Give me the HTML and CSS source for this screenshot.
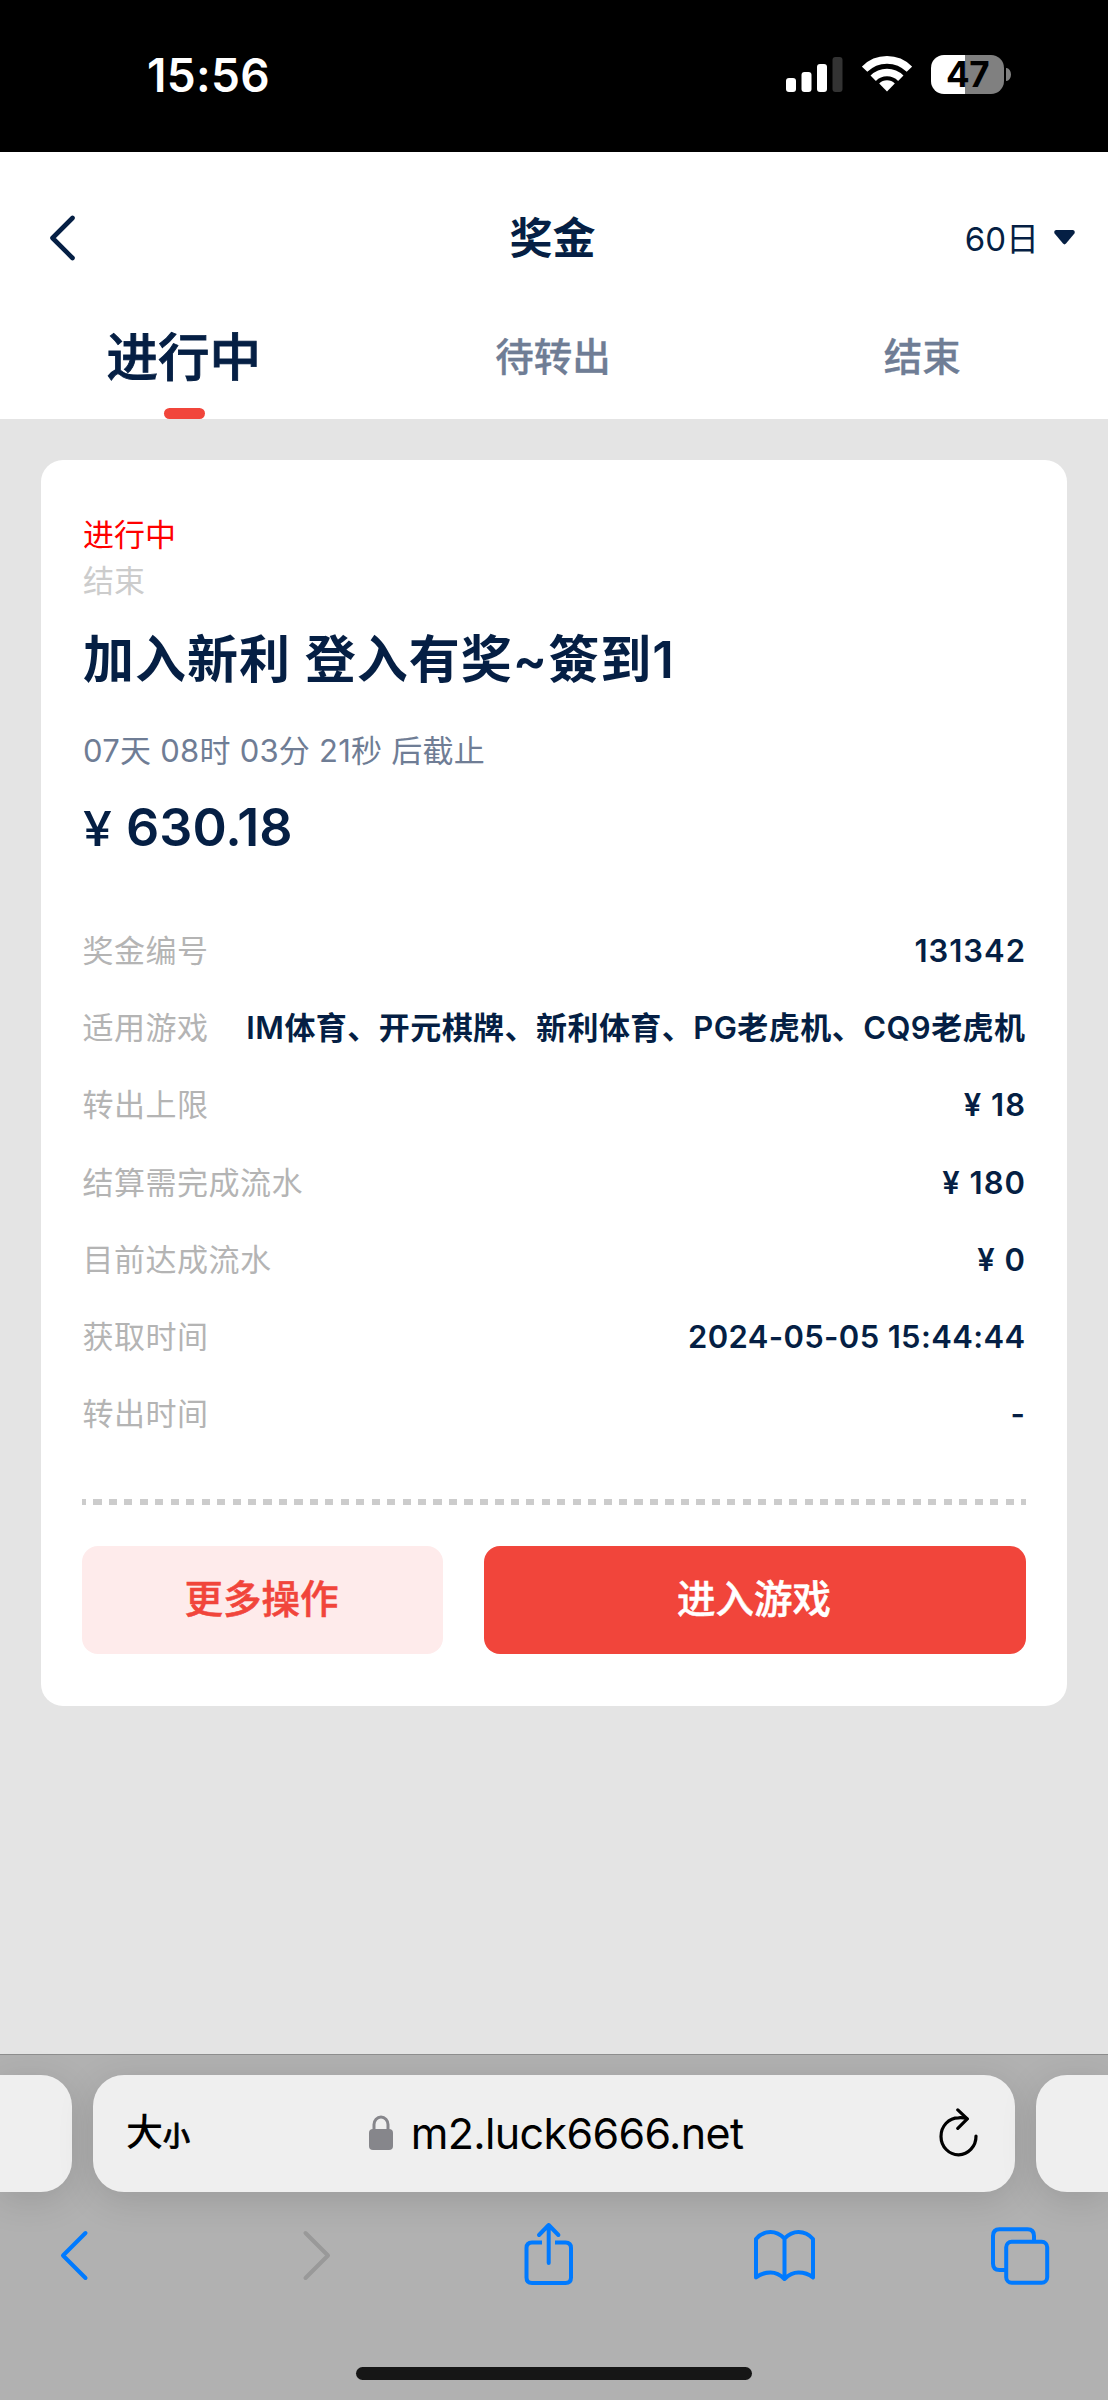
FILE: index.html
```html
<!DOCTYPE html>
<html lang="zh-CN">
<head>
<meta charset="utf-8">
<title>奖金</title>
<link rel="stylesheet" href="styles.css">
</head>
<body>
<div class="screen">
  <div class="status">
    <span class="clock">15:56</span>
    <div class="status-icons">
      <svg class="signal" width="57" height="36" viewBox="0 0 57 36">
        <rect x="0" y="22" width="10" height="14" rx="3" fill="#fff"/>
        <rect x="15.5" y="16" width="10" height="20" rx="3" fill="#fff"/>
        <rect x="31" y="8" width="10" height="28" rx="3" fill="#fff"/>
        <rect x="46.5" y="1" width="10" height="35" rx="3" fill="#333"/>
      </svg>
      <svg class="wifi" width="50" height="37" viewBox="0 0 50 37">
        <g fill="none" stroke="#fff" stroke-width="7.6">
          <path d="M2.6 14.2 A31.5 31.5 0 0 1 47.4 14.2"/>
          <path d="M11.2 23.2 A19.5 19.5 0 0 1 38.8 23.2"/>
        </g>
        <path d="M25 36.5 L17.2 28.6 A11 11 0 0 1 32.8 28.6 Z" fill="#fff"/>
      </svg>
      <div class="battery"><span class="battery-level">47</span><i class="battery-cap"></i></div>
    </div>
  </div>

  <header class="header">
    <svg class="back" width="28" height="46" viewBox="0 0 28 46"><path d="M24.5 3 L4.5 23 L24.5 43" fill="none" stroke="#051f44" stroke-width="4.6" stroke-linecap="round" stroke-linejoin="round"/></svg>
    <h1 class="title">奖金</h1>
    <div class="range"><span>60日</span><svg width="21" height="15" viewBox="0 0 21 15"><path d="M2 0H19Q21.6 1 20.4 3.4L12 13.6Q10.5 15.2 9 13.6L.6 3.4Q-.6 1 2 0Z" fill="#051f44"/></svg></div>
  </header>
  <nav class="tabs">
    <div class="tab active">进行中</div>
    <div class="tab">待转出</div>
    <div class="tab">结束</div>
  </nav>

  <main class="content">
    <section class="card">
      <div class="state on">进行中</div>
      <div class="state off">结束</div>
      <h2 class="name">加入新利 登入有奖~簽到1</h2>
      <div class="timer">07天 08时 03分 21秒 后截止</div>
      <div class="amount"><span class="yen">¥</span> 630.18</div>
      <dl class="rows">
        <div class="row"><dt>奖金编号</dt><dd>131342</dd></div>
        <div class="row"><dt>适用游戏</dt><dd class="games">IM体育、开元棋牌、新利体育、PG老虎机、CQ9老虎机</dd></div>
        <div class="row"><dt>转出上限</dt><dd>¥ 18</dd></div>
        <div class="row"><dt>结算需完成流水</dt><dd>¥ 180</dd></div>
        <div class="row"><dt>目前达成流水</dt><dd>¥ 0</dd></div>
        <div class="row"><dt>获取时间</dt><dd class="date">2024-05-05 15:44:44</dd></div>
        <div class="row"><dt>转出时间</dt><dd>-</dd></div>
      </dl>
      <div class="divider"></div>
      <div class="actions">
        <div class="btn more">更多操作</div>
        <div class="btn play">进入游戏</div>
      </div>
    </section>
  </main>

  <footer class="browser">
    <div class="pills">
      <div class="pill side left"></div>
      <div class="pill address">
        <div class="size"><span class="big">大</span><span class="small">小</span></div>
        <div class="url">
          <svg width="24" height="36" viewBox="0 0 24 36"><rect x="0" y="14" width="24" height="21" rx="4" fill="#86868b"/><path d="M5 16V9.500a7 7.500 0 0 1 14 0V16" fill="none" stroke="#86868b" stroke-width="3"/></svg>
          <span>m2.luck6666.net</span>
        </div>
        <svg class="reload" width="40" height="50" viewBox="0 0 40 50"><g fill="none" stroke="#000" stroke-width="3.2" stroke-linecap="round" stroke-linejoin="round"><path d="M37 28A17.500 18.500 0 1 1 19.500 9.800Q24 9.400 28 10.700"/><path d="M18.800 1.900L28.300 10.900L18.800 20.400"/></g></svg>
      </div>
      <div class="pill side right"></div>
    </div>
    <div class="tools">
      <svg width="64" height="68" viewBox="0 0 64 68"><path d="M43.500 13L21 35.500L43.500 58" class="line blue"/></svg>
      <svg width="64" height="68" viewBox="0 0 64 68"><path d="M26.500 13L49 35.500L26.500 58" class="line gray"/></svg>
      <svg width="64" height="68" viewBox="0 0 64 68"><g class="line blue"><path class="butt" d="M27 22.500H17Q11.500 22.500 11.500 28V57.500Q11.500 63 17 63H50.500Q56 63 56 57.500V28Q56 22.500 50.500 22.500H40"/><path d="M33.700 43V5M24 15L33.700 5L43.400 15"/></g></svg>
      <svg width="64" height="68" viewBox="0 0 64 68"><path d="M32.500 18.500V59M32.500 18.500Q26 12 18.500 12Q10 12 4 19V57.500Q10 52.500 18.500 52.500Q26 52.500 32.500 59Q39 52.500 46.500 52.500Q55 52.500 61 57.500V19Q55 12 46.500 12Q39 12 32.500 18.500Z" class="line blue"/></svg>
      <svg width="64" height="68" viewBox="0 0 64 68"><g class="line blue"><path class="butt" d="M18 50H11.500Q5 50 5 43.500V16Q5 9.300 11.500 9.300H39.500Q46 9.300 46 16V21.500"/><rect x="18.200" y="21.700" width="41" height="41" rx="5.500"/></g></svg>
    </div>
    <div class="home"></div>
  </footer>
</div>
</body>
</html>
```
FILE: styles.css
```css
* { box-sizing: border-box; }
body { margin: 0; }
.screen {
  width: 1108px; height: 2400px; display: flex; flex-direction: column; overflow: hidden;
  background: #e4e4e4; color: #051f44;
  font-family: Inter, "Noto Sans CJK SC", sans-serif;
}
h1, h2, dl, dd { margin: 0; }

.status {
  height: 152px; padding: 0 104px 0 147px; background: #000; color: #fff;
  display: flex; justify-content: space-between; align-items: flex-start;
}
.clock { margin-top: 47px; font-size: 46px; line-height: 56px; font-weight: 600; letter-spacing: .3px; }
.status-icons { display: flex; align-items: flex-start; padding-top: 55px; }
.signal { margin: 1px 19px 0 0; }
.wifi { margin-right: 19px; }
.battery {
  position: relative; width: 73px; height: 39px; border-radius: 13px;
  background: linear-gradient(90deg, #fff 34px, #808080 34px);
}
.battery-level {
  display: block; text-align: center; color: #000; font-size: 35px; line-height: 39px;
  font-weight: 700; letter-spacing: -.5px;
}
.battery-cap {
  position: absolute; left: 75px; top: 13px; width: 5px; height: 13px;
  border-radius: 0 5px 5px 0 / 0 7px 7px 0; background: #808080;
}

.header {
  height: 165px; padding: 6px 33px 0 48px; background: #fff;
  display: grid; grid-template-columns: 1fr 86px 1fr; align-items: center;
}
.title { font-size: 43px; line-height: 60px; font-weight: 600; margin-left: -9px; white-space: nowrap; }
.range { display: flex; justify-content: flex-end; align-items: center; gap: 15px; font-size: 33px; }
.range span { margin-top: -1px; }
.tabs { height: 102px; background: #fff; display: grid; grid-template-columns: repeat(3, 1fr); text-align: center; }
.tab {
  position: relative; right: 1px; padding-top: 1px; font-size: 38.500px; line-height: 78px; font-weight: 500;
  color: #6f7d95; -webkit-text-stroke: .3px;
}
.tab.active { color: #051f44; font-size: 51.500px; -webkit-text-stroke: .9px; }
.tab.active::after {
  content: ""; position: absolute; left: 50%; bottom: 0; width: 41px; height: 11px;
  margin-left: -20px; border-radius: 5.500px; background: #f1453b;
}

.content { flex: 1; padding: 41px 41px 0; }
.card { height: 1246px; padding: 52px 41px 0; border-radius: 22px; background: #fff; }
.state, .name, .timer, .amount { margin-left: 1px; }
.state { font-size: 31px; line-height: 46px; }
.state.on { color: #f00; }
.state.off { color: #ccc; }
.name { margin-top: 21px; font-size: 51px; line-height: 70px; font-weight: 600; letter-spacing: 1px; white-space: nowrap; }
.timer { margin-top: 33px; font-size: 31px; line-height: 46px; letter-spacing: .25px; color: #6f7d95; }
.amount { margin-top: 19px; font-size: 52px; line-height: 70px; font-weight: 600; white-space: nowrap; }
.yen { display: inline-block; width: 32px; margin-right: -2px; font-size: 48px; font-weight: 500; transform: scaleX(1.08); transform-origin: left; }
.rows { margin-top: 48px; }
.row { height: 77.200px; display: flex; justify-content: space-between; align-items: center; font-size: 31px; letter-spacing: .5px; white-space: nowrap; }
.row dt { color: #b4b4b4; margin: 0 0 4px .5px; }
.row dd { font-weight: 600; letter-spacing: 1px; }
.row dd.games { letter-spacing: .45px; margin: 0 .500px 4px 0; }
.row dd.date { letter-spacing: .35px; margin-right: .6px; }
.divider {
  height: 5.500px; margin-top: 47px;
  background: repeating-linear-gradient(90deg, #ccc 0 4.100px, transparent 4.100px 11.360px, #ccc 11.360px 15.460px);
}
.actions { display: flex; gap: 41px; margin-top: 41px; }
.btn { height: 108px; border-radius: 16px; padding-right: 2px; font-size: 38.500px; line-height: 107px; font-weight: 500; text-align: center; -webkit-text-stroke: .5px; }
.more { width: 361px; background: #feebeb; color: #f1453b; }
.play { flex: 1; background: #f1453b; color: #fff; }

.browser { height: 346px; border-top: 1px solid #8e8e8e; background: #b1b1b1; padding-top: 20px; }
.pills { display: flex; gap: 21px; }
.pill { height: 116.500px; border-radius: 31px; background: #efefef; box-shadow: 0 8px 36px rgba(0, 0, 0, .13); }
.side { width: 72px; }
.left { border-radius: 0 31px 31px 0; }
.right { border-radius: 31px 0 0 31px; }
.address { flex: 1; display: flex; align-items: center; justify-content: space-between; padding: 0 36px 0 33px; color: #000; }
.size { display: flex; align-items: baseline; font-weight: 500; line-height: 60px; margin: 4px 0 0; }
.big { font-size: 37px; }
.small { font-size: 27px; -webkit-text-stroke: .8px; }
.url { display: flex; align-items: center; gap: 18px; margin-right: 17px; font-size: 43px; line-height: 60px; letter-spacing: -.65px; }
.tools { height: 68px; margin-top: 28px; padding: 0 56px 0 42px; display: flex; justify-content: space-between; }
.line { fill: none; stroke-width: 4; stroke-linecap: round; stroke-linejoin: round; }
.butt { stroke-linecap: butt; }
.blue { stroke: #007aff; }
.gray { stroke: #999; }
.home { width: 396px; height: 13px; margin: 79px auto 0; border-radius: 7px; background: #161616; }
```
